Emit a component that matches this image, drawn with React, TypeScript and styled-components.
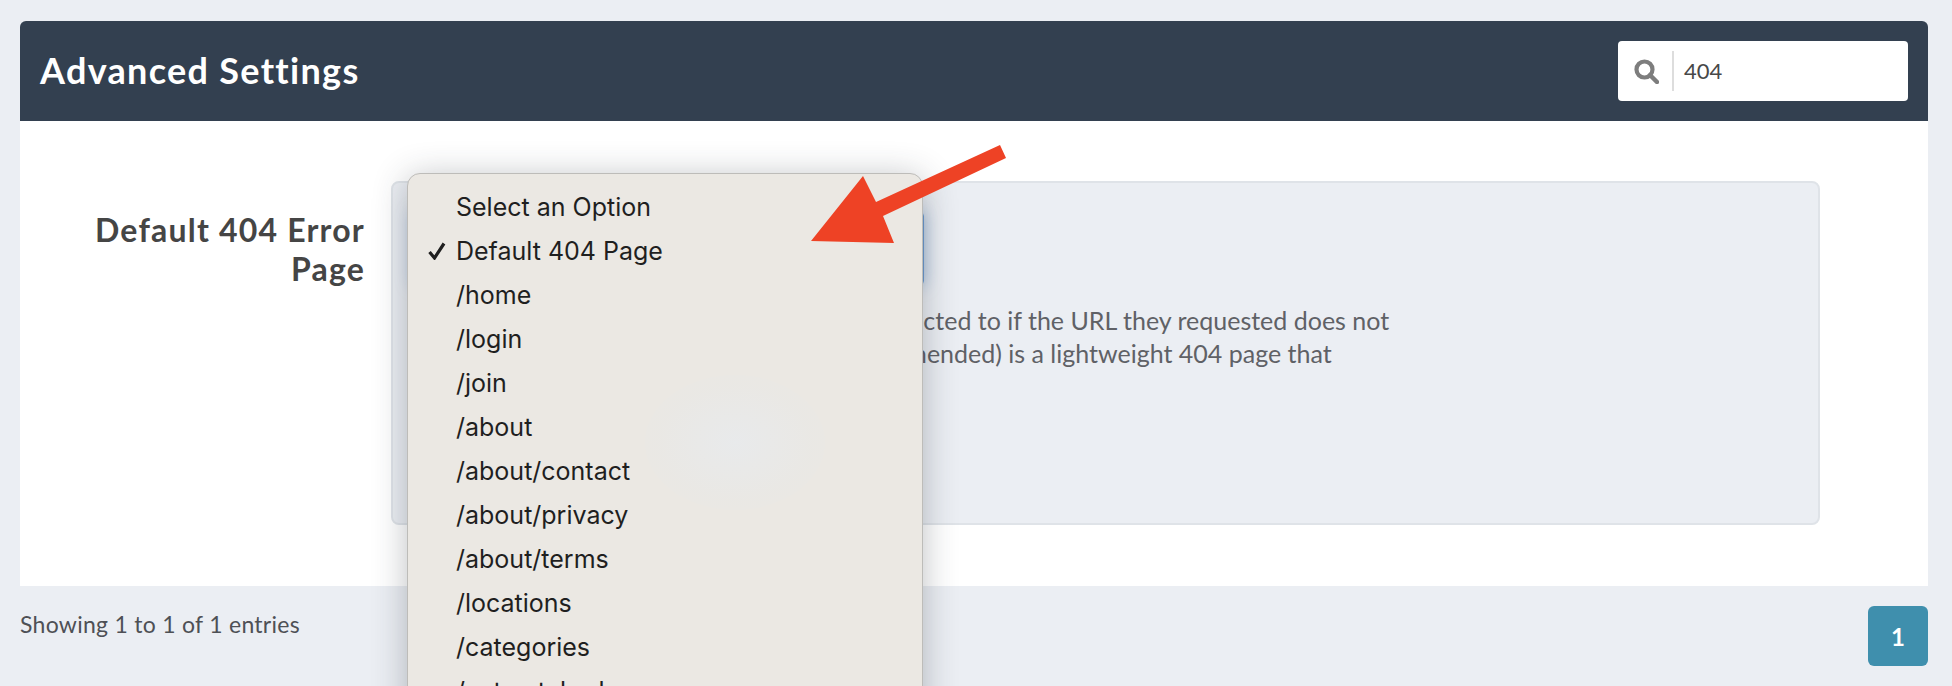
import * as React from 'react';
import styled, { createGlobalStyle } from 'styled-components';

const pageColor = '#ebeef3';
const headerColor = '#334050';
const menuColor = '#ebe8e3';

const GlobalStyle = createGlobalStyle`
    html, body {
        margin: 0;
        padding: 0;
        height: 686px;
        overflow: hidden;
        background: ${pageColor};
    }
`;

const Page = styled.div`
    position: relative;
    width: 1952px;
    height: 686px;
    box-sizing: border-box;
    padding: 21px 24px 0 20px;
    overflow: hidden;
    background: ${pageColor};
    font-family: Lato, "Open Sans", sans-serif;
`;

const Panel = styled.section`
    display: flex;
    flex-direction: column;
`;

const PanelHeader = styled.header`
    display: flex;
    align-items: center;
    justify-content: space-between;
    height: 100px;
    padding: 0 20px;
    background: ${headerColor};
    border-radius: 6px 6px 0 0;
`;

const Title = styled.h1`
    margin: 0 0 2px 0;
    color: #fff;
    font-size: 36px;
    font-weight: 700;
    letter-spacing: 1.3px;
`;

const SearchBox = styled.div`
    display: flex;
    align-items: center;
    width: 290px;
    height: 60px;
    box-sizing: border-box;
    padding: 10px 0 10px 16px;
    background: #fff;
    border-radius: 4px;
`;

const SearchIcon = styled.svg`
    width: 25px;
    height: 25px;
    flex: none;
    margin-right: 13px;
`;

const SearchValue = styled.div`
    display: flex;
    align-items: center;
    height: 38px;
    padding: 0 0 2px 10px;
    border-left: 2px solid #dddddd;
    color: #484848;
    font-size: 22px;
`;

const PanelBody = styled.div`
    display: flex;
    align-items: flex-start;
    gap: 26px;
    height: 465px;
    box-sizing: border-box;
    padding: 60px 108px 0 0;
    background: #fff;
`;

const FieldLabel = styled.label`
    width: 345px;
    flex: none;
    box-sizing: border-box;
    margin-top: 29px;
    padding-left: 60px;
    color: #454545;
    font-size: 32px;
    line-height: 39px;
    font-weight: 700;
    letter-spacing: 1.2px;
    text-align: right;
`;

const FieldBox = styled.div`
    flex: 1;
    height: 344px;
    box-sizing: border-box;
    padding: 29px 20px 0 20px;
    background: ${pageColor};
    border: 2px solid #dfe3e8;
    border-radius: 8px;
`;

const SelectControl = styled.div`
    width: 511px;
    height: 73px;
    box-sizing: border-box;
    background: #fff;
    border: 1px solid #6c9bd1;
    border-radius: 4px;
    box-shadow: 0 0 16px rgba(108, 155, 209, 0.6);
`;

const HelpText = styled.p`
    width: 1000px;
    margin: 19px 0 0 17px;
    color: #5f6166;
    font-size: 25px;
    line-height: 33px;
    white-space: nowrap;
`;

const Footer = styled.footer`
    display: flex;
    align-items: flex-start;
    justify-content: space-between;
    padding-top: 20px;
`;

const EntryCount = styled.span`
    margin-top: 4px;
    color: #4e5055;
    font-size: 23px;
    letter-spacing: 0.28px;
`;

const PageButton = styled.button`
    width: 60px;
    height: 60px;
    padding: 0;
    border: 0;
    border-radius: 6px;
    background: #3f8fad;
    color: #fff;
    font-family: Lato, sans-serif;
    font-size: 24px;
    font-weight: 700;
`;

const Menu = styled.ul`
    position: absolute;
    top: 173px;
    left: 407px;
    width: 516px;
    height: 560px;
    box-sizing: border-box;
    margin: 0;
    padding: 11px 0 0 0;
    list-style: none;
    background: ${menuColor};
    border: 1px solid #bdbcb9;
    border-radius: 13px;
    box-shadow: 0 4px 34px rgba(40, 45, 55, 0.3);
    font-family: Inter, Roboto, sans-serif;
    overflow: hidden;
`;

const MenuItem = styled.li`
    position: relative;
    height: 44px;
    padding-left: 48px;
    color: #1f1f1f;
    font-size: 25px;
    line-height: 44px;
`;

const CheckMark = styled.svg`
    position: absolute;
    left: 20px;
    top: 13px;
    width: 18px;
    height: 18px;
`;

const MenuGlow = styled.div`
    position: absolute;
    left: 645px;
    top: 375px;
    width: 180px;
    height: 135px;
    border-radius: 50%;
    background: radial-gradient(ellipse at center, rgba(232, 234, 236, 0.9) 0%, rgba(233, 232, 229, 0.7) 60%, rgba(235, 232, 227, 0) 100%);
`;

const Arrow = styled.svg`
    position: absolute;
    left: 800px;
    top: 140px;
    width: 220px;
    height: 120px;
`;

const menuOptions = [
    'Select an Option',
    'Default 404 Page',
    '/home',
    '/login',
    '/join',
    '/about',
    '/about/contact',
    '/about/privacy',
    '/about/terms',
    '/locations',
    '/categories',
    '/catmatched',
];

export default function App()
{
    return (
        <Page>
            <GlobalStyle />
            <Panel>
                <PanelHeader>
                    <Title>Advanced Settings</Title>
                    <SearchBox>
                        <SearchIcon viewBox="0 0 25 25">
                            <circle cx="10.5" cy="10.5" r="8" fill="none" stroke="#7d7d7d" strokeWidth="4.2" />
                            <path d="M16 16 L23 23" stroke="#7d7d7d" strokeWidth="4.5" strokeLinecap="round" />
                        </SearchIcon>
                        <SearchValue>404</SearchValue>
                    </SearchBox>
                </PanelHeader>
                <PanelBody>
                    <FieldLabel>Default 404 Error Page</FieldLabel>
                    <FieldBox>
                        <SelectControl />
                        <HelpText>
                            Select the page that a visitor should be redirected to if the URL they requested does not
                            <br />
                            exist. The Default 404 Page selector (recommended) is a lightweight 404 page that
                        </HelpText>
                    </FieldBox>
                </PanelBody>
                <Footer>
                    <EntryCount>Showing 1 to 1 of 1 entries</EntryCount>
                    <PageButton>1</PageButton>
                </Footer>
            </Panel>
            <Menu>
                {menuOptions.map((option, index) => (
                    <MenuItem key={option}>
                        {index === 1 && (
                            <CheckMark viewBox="0 0 18 18">
                                <path d="M1.5 10 L6.5 16 L16 1.5" fill="none" stroke="#1f1f1f" strokeWidth="3.2" />
                            </CheckMark>
                        )}
                        {option}
                    </MenuItem>
                ))}
            </Menu>
            <MenuGlow />
            <Arrow viewBox="800 140 220 120">
                <polygon fill="#ee4225" points="1000,145 1006,158 883,216 894,243 811,241 863,176 876,202" />
            </Arrow>
        </Page>
    );
}
